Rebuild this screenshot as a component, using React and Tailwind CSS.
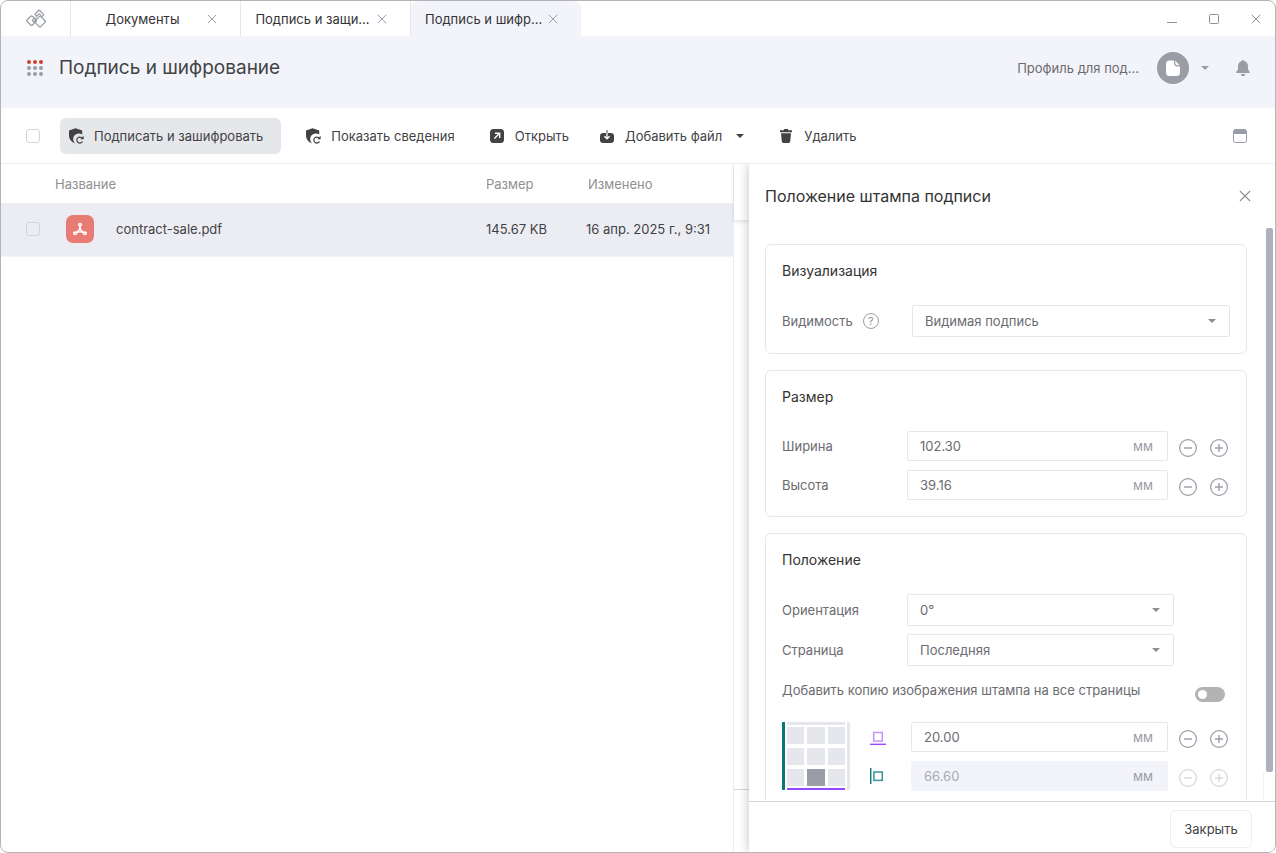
import React, { useState } from "react";

const tabs = [
  { id: 1, title: "Документы" },
  { id: 2, title: "Подпись и защи..." },
  { id: 3, title: "Подпись и шифр..." },
];

const files = [
  {
    id: 1,
    name: "contract-sale.pdf",
    size: "145.67 KB",
    changed: "16 апр. 2025 г., 9:31",
  },
];

function CrossIcon({ className }) {
  return (
    <svg viewBox="0 0 10 10" className={className} fill="none" stroke="currentColor">
      <path d="M0.8 0.8l8.4 8.4M9.2 0.8L0.8 9.2" />
    </svg>
  );
}

function CaretIcon({ className }) {
  return (
    <svg viewBox="0 0 8 4" className={className} fill="currentColor">
      <path d="M0 0h8L4 4z" />
    </svg>
  );
}

function LogoIcon() {
  return (
    <svg viewBox="0 0 20 20" className="h-5 w-5" fill="none" stroke="#9599a2" strokeWidth="1.2">
      <rect x="-3.7" y="-3.7" width="7.4" height="7.4" rx="1.2" transform="translate(5.6 11.6) rotate(45)" />
      <rect x="-4.1" y="-4.1" width="8.2" height="8.2" rx="1.2" transform="translate(14 12.6) rotate(45)" />
      <rect x="-1.6" y="-1.6" width="3.2" height="3.2" rx="0.6" transform="translate(8.4 11.4) rotate(45)" />
      <path d="M10.2 8.200V6.600l-1.200-1.200 3.400-3.900a0.900 0.900 0 0 1 1.300 0l3.600 3.600a0.900 0.900 0 0 1 0 1.300l-1.500 1.500" />
      <path d="M10.700 7.200l2-2a0.800 0.800 0 0 1 1.100 0l1.600 1.600" />
    </svg>
  );
}

function AppsIcon() {
  const steps = [2, 8, 14];
  return (
    <svg viewBox="0 0 16 16" className="h-4 w-4">
      {steps.map((y) =>
        steps.map((x) => (
          <circle key={`${x}-${y}`} cx={x} cy={y} r="2" fill={y === 2 ? "#d0402f" : "#9a9da6"} />
        )),
      )}
    </svg>
  );
}

function ShieldIcon() {
  return (
    <svg viewBox="0 0 16 16" className="h-4 w-4 shrink-0">
      <path
        d="M7.6 0.2L14.2 2.6V6.6A5.400 5.400 0 0 0 7.300 15.400C3.400 14 1 11.200 1 7.200V2.600z"
        fill="#424245"
      />
      <path
        d="M14.200 10.200A3 3 0 1 0 14.500 13.400"
        fill="none"
        stroke="#424245"
        strokeWidth="1.200"
      />
      <path d="M15.600 7.800v3.400h-3.400z" fill="#424245" />
    </svg>
  );
}

function OpenIcon() {
  return (
    <svg viewBox="0 0 16 16" className="h-4 w-4 shrink-0">
      <rect x="1" y="1" width="14" height="14" rx="3.5" fill="#424245" />
      <path d="M5.4 10.6l5-5M6 5.3h4.7V10" fill="none" stroke="#fff" strokeWidth="1.4" />
    </svg>
  );
}

function AddFileIcon() {
  return (
    <svg viewBox="0 0 16 16" className="h-4 w-4 shrink-0">
      <path
        d="M4.2 5h7.6A3.2 3.2 0 0 1 15 8.2v3.6A3.2 3.2 0 0 1 11.8 15H4.2A3.2 3.2 0 0 1 1 11.8V8.2A3.2 3.2 0 0 1 4.2 5z"
        fill="#424245"
      />
      <path d="M8 5v5.2M5.4 8.2L8 10.8l2.6-2.6" fill="none" stroke="#fff" strokeWidth="1.3" />
      <path d="M8 2v3" stroke="#77777a" strokeWidth="1.3" />
    </svg>
  );
}

function TrashIcon() {
  return (
    <svg viewBox="0 0 16 16" className="h-4 w-4 shrink-0" fill="#424245">
      <path d="M2 2.2h3.6L6.2 1h3.6l0.6 1.2H14v2H2z" />
      <path d="M3 5.2h10l-0.8 8.4A1.6 1.6 0 0 1 10.6 15H5.4a1.6 1.6 0 0 1-1.6-1.4z" />
    </svg>
  );
}

function BellIcon() {
  return (
    <svg viewBox="0 0 16 16" className="h-4 w-4" fill="#9a9da6">
      <path d="M8 0a1.2 1.2 0 0 1 1.2 1.1C11.6 1.6 13 3.6 13 6v3.6l1.7 2.2V13H1.3v-1.2L3 9.6V6c0-2.4 1.4-4.4 3.8-4.9A1.2 1.2 0 0 1 8 0z" />
      <path d="M5.8 14h4.4a2.2 2.2 0 0 1-4.4 0z" />
    </svg>
  );
}

function ProfileIcon() {
  return (
    <svg viewBox="0 0 32 32" className="h-8 w-8">
      <circle cx="16" cy="16" r="16" fill="#9a9da6" />
      <path
        d="M12.5 8.5H17v2.6A3.4 3.4 0 0 0 20.4 14.5H23V20.5A3.5 3.5 0 0 1 19.5 24h-7A3.5 3.5 0 0 1 9 20.5V12a3.5 3.5 0 0 1 3.5-3.5z"
        fill="#fff"
      />
      <path d="M18.2 8.8L22.7 13.3H20.4a2.2 2.2 0 0 1-2.2-2.2z" fill="#fff" />
    </svg>
  );
}

function PdfIcon() {
  return (
    <svg viewBox="0 0 28 28" className="h-7 w-7 shrink-0">
      <rect width="28" height="28" rx="7" fill="#e87b73" />
      <g fill="none" stroke="#fff" strokeWidth="1.5">
        <circle cx="14" cy="9.8" r="1.3" />
        <circle cx="9.1" cy="18.3" r="1.3" />
        <circle cx="18.9" cy="18.3" r="1.3" />
        <path d="M14 11.2c0 2.6-1.4 5-3.8 6.3M14 11.2c0 2.6 1.4 5 3.8 6.3M10.5 17.7c2.2-1.2 4.8-1.2 7 0" />
      </g>
    </svg>
  );
}

function WindowIcon() {
  return (
    <svg viewBox="0 0 14 14" className="h-3.5 w-3.5">
      <rect x="0.5" y="0.5" width="13" height="13" rx="2" fill="none" stroke="#9a9da6" />
      <path d="M0.5 5V2.5a2 2 0 0 1 2-2h9a2 2 0 0 1 2 2V5z" fill="#9a9da6" />
    </svg>
  );
}

function BottomOffsetIcon() {
  return (
    <svg viewBox="0 0 16 16" className="h-4 w-4" fill="none">
      <rect x="3.7" y="3.5" width="8.6" height="8.6" stroke="#c495ff" strokeWidth="1.5" />
      <path d="M0 15.3h16" stroke="#9747ff" strokeWidth="1.4" />
    </svg>
  );
}

function LeftOffsetIcon() {
  return (
    <svg viewBox="0 0 16 16" className="h-4 w-4" fill="none">
      <rect x="3.9" y="4" width="8.4" height="8.4" stroke="#3c9391" strokeWidth="1.5" />
      <path d="M0.7 0v16" stroke="#0d7573" strokeWidth="1.4" />
    </svg>
  );
}

function Checkbox({ label }) {
  return (
    <input
      type="checkbox"
      aria-label={label}
      className="block h-3.5 w-3.5 appearance-none rounded-[3px] border border-[#d3d5db] checked:bg-[#9a9da6]"
    />
  );
}

function ToolButton({ icon, children, className = "" }) {
  return (
    <button
      type="button"
      className={`flex h-9 items-center gap-2.5 rounded-md pl-2 whitespace-nowrap ${className}`}
    >
      {icon}
      {children}
    </button>
  );
}

function TabBar() {
  return (
    <div className="flex h-[35px] shrink-0 justify-between">
      <div className="flex">
        <div className="flex w-[70px] items-center justify-center border-r border-[#e6e7ec]">
          <LogoIcon />
        </div>
        {tabs.map((tab) => (
          <div
            key={tab.id}
            className="flex w-[170px] items-center border-r border-[#e6e7ec] pr-4 pl-3.5 last:rounded-t-lg last:border-r-0 last:bg-[#f3f4fa] last:pr-[17px]"
          >
            <button type="button" className="flex-1 whitespace-nowrap text-[#333]">
              {tab.title}
            </button>
            <button
              type="button"
              aria-label="Закрыть вкладку"
              className="flex w-6 justify-center text-[#9a9da6]"
            >
              <CrossIcon className="h-2.5 w-2.5" />
            </button>
          </div>
        ))}
      </div>
      <div className="flex items-center gap-8 pr-3.5 text-[#8d8f96]">
        <button type="button" aria-label="Свернуть">
          <svg viewBox="0 0 10 10" className="h-2.5 w-2.5" stroke="currentColor">
            <path d="M0 8.5h10" />
          </svg>
        </button>
        <button type="button" aria-label="Развернуть">
          <svg viewBox="0 0 10 10" className="h-2.5 w-2.5" fill="none" stroke="currentColor">
            <rect x="0.5" y="0.5" width="9" height="9" rx="1" />
          </svg>
        </button>
        <button type="button" aria-label="Закрыть окно">
          <CrossIcon className="h-2.5 w-2.5" />
        </button>
      </div>
    </div>
  );
}

function Header() {
  return (
    <header className="flex h-[72px] shrink-0 items-center bg-[#f3f4fa] pr-6 pb-2 pl-[26px]">
      <button type="button" aria-label="Меню">
        <AppsIcon />
      </button>
      <h1 className="ml-4 flex-1 text-[19px] text-[#424245]">Подпись и шифрование</h1>
      <button type="button" className="flex items-center text-[#6b6b70]">
        Профиль для под...
        <span className="mr-3 ml-[18px]">
          <ProfileIcon />
        </span>
        <CaretIcon className="h-1 w-2 text-[#9a9da6]" />
      </button>
      <button type="button" aria-label="Уведомления" className="ml-[26px]">
        <BellIcon />
      </button>
    </header>
  );
}

function Toolbar() {
  return (
    <div className="flex h-14 shrink-0 items-center border-b border-[#ecedf3] pr-7 pl-[25px] text-[#424245]">
      <Checkbox label="Выбрать все" />
      <div className="ml-5 flex flex-1 gap-2">
        <ToolButton icon={<ShieldIcon />} className="bg-[#e6e7eb] pr-[18px]">
          Подписать и зашифровать
        </ToolButton>
        <ToolButton icon={<ShieldIcon />} className="ml-2 pr-[18px]">
          Показать сведения
        </ToolButton>
        <ToolButton icon={<OpenIcon />} className="pr-3.5">
          Открыть
        </ToolButton>
        <ToolButton icon={<AddFileIcon />} className="pr-[18px]">
          Добавить файл
          <CaretIcon className="ml-1 h-1 w-2" />
        </ToolButton>
        <ToolButton icon={<TrashIcon />} className="pr-3.5">
          Удалить
        </ToolButton>
      </div>
      <button type="button" aria-label="Вид">
        <WindowIcon />
      </button>
    </div>
  );
}

function FileTable() {
  return (
    <div className="min-w-0 flex-1">
      <table className="w-full table-fixed text-left">
        <thead>
          <tr className="h-[39px] text-[#8f8f93]">
            <th className="w-[54px]"></th>
            <th className="font-normal">Название</th>
            <th className="w-[100px] font-normal">Размер</th>
            <th className="w-[147px] pl-[2px] font-normal">Изменено</th>
          </tr>
        </thead>
        <tbody>
          {files.map((file) => (
            <tr key={file.id} className="h-[53px] border-b border-[#f3f4fa] bg-[#ecedf3] text-[#424245]">
              <td className="pl-[25px]">
                <Checkbox label={file.name} />
              </td>
              <td>
                <div className="flex items-center gap-[22px] pl-[11px]">
                  <PdfIcon />
                  {file.name}
                </div>
              </td>
              <td className="whitespace-nowrap">{file.size}</td>
              <td className="whitespace-nowrap">{file.changed}</td>
            </tr>
          ))}
        </tbody>
      </table>
    </div>
  );
}

function Card({ title, children }) {
  return (
    <section className="rounded-md border border-[#e6e7ec] p-4">
      <h3 className="mb-6 text-sm text-[#333]">{title}</h3>
      {children}
    </section>
  );
}

function SelectBox({ id, options, className }) {
  return (
    <div className={`relative h-8 ${className}`}>
      <select
        id={id}
        className="h-full w-full appearance-none rounded-xs border border-[#e6e7ec] pr-8 pl-3 text-[#6b6b70]"
      >
        {options.map((option) => (
          <option key={option}>{option}</option>
        ))}
      </select>
      <CaretIcon className="pointer-events-none absolute top-3.5 right-3.5 h-1 w-2 text-[#8d8f96]" />
    </div>
  );
}

function StepButton({ label, plus, disabled }) {
  return (
    <button type="button" aria-label={label} disabled={disabled} className="disabled:opacity-40">
      <svg viewBox="0 0 18 18" className="h-[18px] w-[18px]" fill="none" stroke="#9a9da6">
        <circle cx="9" cy="9" r="8.4" strokeWidth="1.2" />
        <path d={plus ? "M5 9h8M9 5v8" : "M5 9h8"} strokeWidth="1.4" />
      </svg>
    </button>
  );
}

function NumberField({ id, label, value, disabled }) {
  const [current, setCurrent] = useState(value);
  return (
    <div className="flex flex-1 items-center">
      <div
        className={`flex h-[30px] min-w-0 flex-1 items-center rounded-xs border pr-3.5 pl-3 ${
          disabled ? "border-[#f3f4fa] bg-[#f3f4fa] text-[#a9abb2]" : "border-[#e6e7ec] text-[#6b6b70]"
        }`}
      >
        <input
          id={id}
          type="text"
          aria-label={label}
          value={current}
          disabled={disabled}
          onChange={(e) => setCurrent(e.target.value)}
          className="min-w-0 flex-1 outline-none"
        />
        <span className="text-[#9a9da6]">мм</span>
      </div>
      <div className="flex gap-[13px] pt-[3px] pr-[2px] pl-[11px]">
        <StepButton label="Уменьшить" disabled={disabled} />
        <StepButton label="Увеличить" plus disabled={disabled} />
      </div>
    </div>
  );
}

function PositionGrid() {
  const cells = [0, 1, 2, 3, 4, 5, 6, 7, 8];
  return (
    <div className="flex h-[68px] w-[68px] shrink-0 justify-between">
      <div className="w-[3px] bg-[#0d7573]" />
      <div className="flex w-[58px] flex-col justify-between">
        <div className="h-[3px] bg-[#e6e7ec]" />
        <div className="grid grid-cols-3 gap-x-[3px] gap-y-1">
          {cells.map((cell) => (
            <button
              key={cell}
              type="button"
              aria-label={`Позиция ${cell + 1}`}
              className={`h-[17px] ${cell === 7 ? "bg-[#9a9da6]" : "bg-[#e6e7ec]"}`}
            />
          ))}
        </div>
        <div className="h-[2px] bg-[#9747ff]" />
      </div>
      <div className="w-[3px] bg-[#e6e7ec]" />
    </div>
  );
}

function StampPanel() {
  return (
    <aside className="relative flex w-[526px] shrink-0 flex-col bg-white shadow-[0_0_10px_rgba(0,0,0,0.25)]">
      <div className="flex h-16 shrink-0 items-center justify-between pr-6 pl-4">
        <h2 className="text-base text-[#333]">Положение штампа подписи</h2>
        <button type="button" aria-label="Закрыть панель" className="text-[#8d8f96]">
          <CrossIcon className="h-3 w-3" />
        </button>
      </div>

      <div className="flex min-h-0 flex-1">
        <div className="flex flex-1 flex-col gap-4 overflow-hidden p-4 text-[#6b6b70]">
          <Card title="Визуализация">
            <div className="flex items-center">
              <label htmlFor="visibility">Видимость</label>
              <span className="ml-2.5 flex h-4 w-4 items-center justify-center rounded-full border border-[#9a9da6] text-[11px] text-[#8d8f96]">
                ?
              </span>
              <SelectBox
                id="visibility"
                options={["Видимая подпись", "Невидимая подпись"]}
                className="ml-auto w-[318px]"
              />
            </div>
          </Card>

          <Card title="Размер">
            <div className="flex flex-col gap-[9px]">
              <div className="flex items-center">
                <label htmlFor="width" className="w-[125px]">
                  Ширина
                </label>
                <NumberField id="width" value="102.30" />
              </div>
              <div className="flex items-center">
                <label htmlFor="height" className="w-[125px]">
                  Высота
                </label>
                <NumberField id="height" value="39.16" />
              </div>
            </div>
          </Card>

          <Card title="Положение">
            <div className="flex flex-col gap-2">
              <div className="flex items-center pr-14">
                <label htmlFor="orientation" className="w-[125px]">
                  Ориентация
                </label>
                <SelectBox id="orientation" options={["0°", "90°", "180°", "270°"]} className="flex-1" />
              </div>
              <div className="flex items-center pr-14">
                <label htmlFor="page" className="w-[125px]">
                  Страница
                </label>
                <SelectBox id="page" options={["Последняя", "Первая"]} className="flex-1" />
              </div>
              <div className="flex h-10 items-center justify-between pr-[5px]">
                <label htmlFor="all-pages" className="pb-2">
                  Добавить копию изображения штампа на все страницы
                </label>
                <input
                  id="all-pages"
                  type="checkbox"
                  role="switch"
                  className="h-[15px] w-[30px] appearance-none rounded-full bg-[#b3b3b3] p-[3px] before:block before:h-[9px] before:w-[9px] before:rounded-full before:bg-white checked:bg-[#0d7573] checked:before:ml-auto"
                />
              </div>
              <div className="flex">
                <PositionGrid />
                <div className="flex w-[61px] flex-col items-center gap-[9px] pr-[5px]">
                  <div className="flex h-[30px] items-center">
                    <BottomOffsetIcon />
                  </div>
                  <div className="flex h-[30px] items-center">
                    <LeftOffsetIcon />
                  </div>
                </div>
                <div className="flex flex-1 flex-col gap-[9px]">
                  <NumberField id="bottom" label="Отступ снизу" value="20.00" />
                  <NumberField id="left" label="Отступ слева" value="66.60" disabled />
                </div>
              </div>
            </div>
          </Card>
        </div>
        <div className="flex w-3 flex-col">
          <div className="ml-[3px] h-[95%] w-[7px] rounded-xs bg-[#adb0bd]" />
          <div className="flex-1 border-l border-[#f3f4fa]" />
        </div>
      </div>

      <div className="flex h-[51px] shrink-0 items-center justify-end border-t border-[#d3d5db] pt-2 pr-[23px] pb-1">
        <button
          type="button"
          className="h-[38px] w-[82px] rounded-md border border-[#ecedf6] text-[#424245]"
        >
          Закрыть
        </button>
      </div>
    </aside>
  );
}

export default function App() {
  return (
    <div className="flex h-screen flex-col overflow-hidden rounded-lg border border-[#b4b4b6] bg-white font-['Inter',sans-serif] text-[13px] leading-5">
      <TabBar />
      <Header />
      <Toolbar />
      <main className="flex min-h-0 flex-1 overflow-hidden">
        <FileTable />
        <div className="flex w-4 shrink-0 flex-col justify-between border-l border-[#ecedf3]">
          <div className="h-14 shadow-[0_2px_4px_rgba(0,0,0,0.12)]" />
          <div className="h-[63px] border-t border-[#d3d5db]" />
        </div>
        <StampPanel />
      </main>
    </div>
  );
}
